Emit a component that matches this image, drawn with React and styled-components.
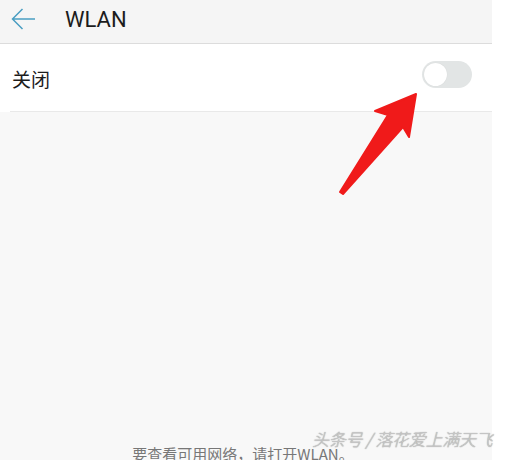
import React from "react";
import styled, { createGlobalStyle } from "styled-components";

const GlobalStyles = createGlobalStyle`
  html, body {
    margin: 0;
    padding: 0;
    background: #ffffff;
  }
  body {
    font-family: Roboto, "Noto Sans CJK SC", sans-serif;
  }
`;

const Page = styled.div`
  position: relative;
  width: 509px;
  height: 460px;
  overflow: hidden;
  background: #ffffff;
`;

const Screen = styled.div`
  display: flex;
  flex-direction: column;
  width: 492px;
  height: 100%;
  background: #f8f8f8;
`;

const Header = styled.header`
  display: flex;
  align-items: center;
  height: 43px;
  padding-left: 11px;
  background: #f5f5f5;
  border-bottom: 1px solid #dcdcdc;
  flex-shrink: 0;
`;

const BackButton = styled.div`
  display: flex;
  width: 25px;
  height: 22px;
  margin-top: -5px;
`;

const Title = styled.h1`
  margin: -5px 0 0 29px;
  font-family: Roboto, sans-serif;
  font-size: 22px;
  font-weight: 400;
  color: #1c1c1c;
`;

const Section = styled.section`
  background: #ffffff;
  padding-left: 10px;
`;

const Row = styled.div`
  display: flex;
  align-items: center;
  justify-content: space-between;
  height: 67px;
  padding: 0 20px 0 2px;
  border-bottom: 1px solid #e9e9e9;
`;

const Label = styled.span`
  font-family: "Noto Sans CJK SC", sans-serif;
  font-size: 19px;
  color: #1c1c1c;
  margin-top: 1px;
`;

const Toggle = styled.div`
  display: flex;
  align-items: center;
  width: 50px;
  height: 27px;
  padding: 0 2px;
  box-sizing: border-box;
  border-radius: 14px;
  background: ${(p) => (p.$on ? "#3a9bd9" : "#e2e5e5")};
  margin-top: -6px;
`;

const Knob = styled.div`
  width: 23px;
  height: 23px;
  border-radius: 50%;
  background: #ffffff;
  box-shadow: 0 0 1px rgba(0, 0, 0, 0.12);
`;

const Body = styled.div`
  flex: 1;
  display: flex;
  flex-direction: column;
  justify-content: flex-end;
  align-items: center;
`;

const Hint = styled.p`
  margin: 0 0 -4px 0;
  padding-right: 6px;
  font-family: "Noto Sans CJK SC", sans-serif;
  font-size: 15px;
  line-height: 20px;
  color: #777777;
`;

const Watermark = styled.div`
  position: absolute;
  left: 312px;
  top: 426px;
  font-family: "Noto Sans CJK SC", sans-serif;
  font-size: 17px;
  font-weight: 300;
  font-style: italic;
  letter-spacing: -0.3px;
  color: #cacaca;
  text-shadow: 0 0 1px #7a7a7a;
  white-space: nowrap;
`;

const ArrowOverlay = styled.svg`
  position: absolute;
  left: 0;
  top: 0;
  pointer-events: none;
`;

export default function App() {
  return (
    <Page>
      <GlobalStyles />
      <Screen>
        <Header>
          <BackButton>
            <svg width="25" height="22" viewBox="0 0 25 22">
              <path
                d="M24 11H1.5M11.5 1L1.5 11L11.5 21"
                fill="none"
                stroke="#4a9ec2"
                strokeWidth="1.5"
              />
            </svg>
          </BackButton>
          <Title>WLAN</Title>
        </Header>
        <Section>
          <Row>
            <Label>关闭</Label>
            <Toggle $on={false}>
              <Knob />
            </Toggle>
          </Row>
        </Section>
        <Body>
          <Hint>要查看可用网络，请打开WLAN。</Hint>
        </Body>
      </Screen>
      <ArrowOverlay width="509" height="460" viewBox="0 0 509 460">
        <polygon
          points="416,94 409,137 403,127 343,194 340,192 388,115 375,111"
          fill="#f01a1a"
          stroke="#f01a1a"
          strokeWidth="2"
          strokeLinejoin="round"
        />
      </ArrowOverlay>
      <Watermark>头条号 / 落花爱上满天飞</Watermark>
    </Page>
  );
}
